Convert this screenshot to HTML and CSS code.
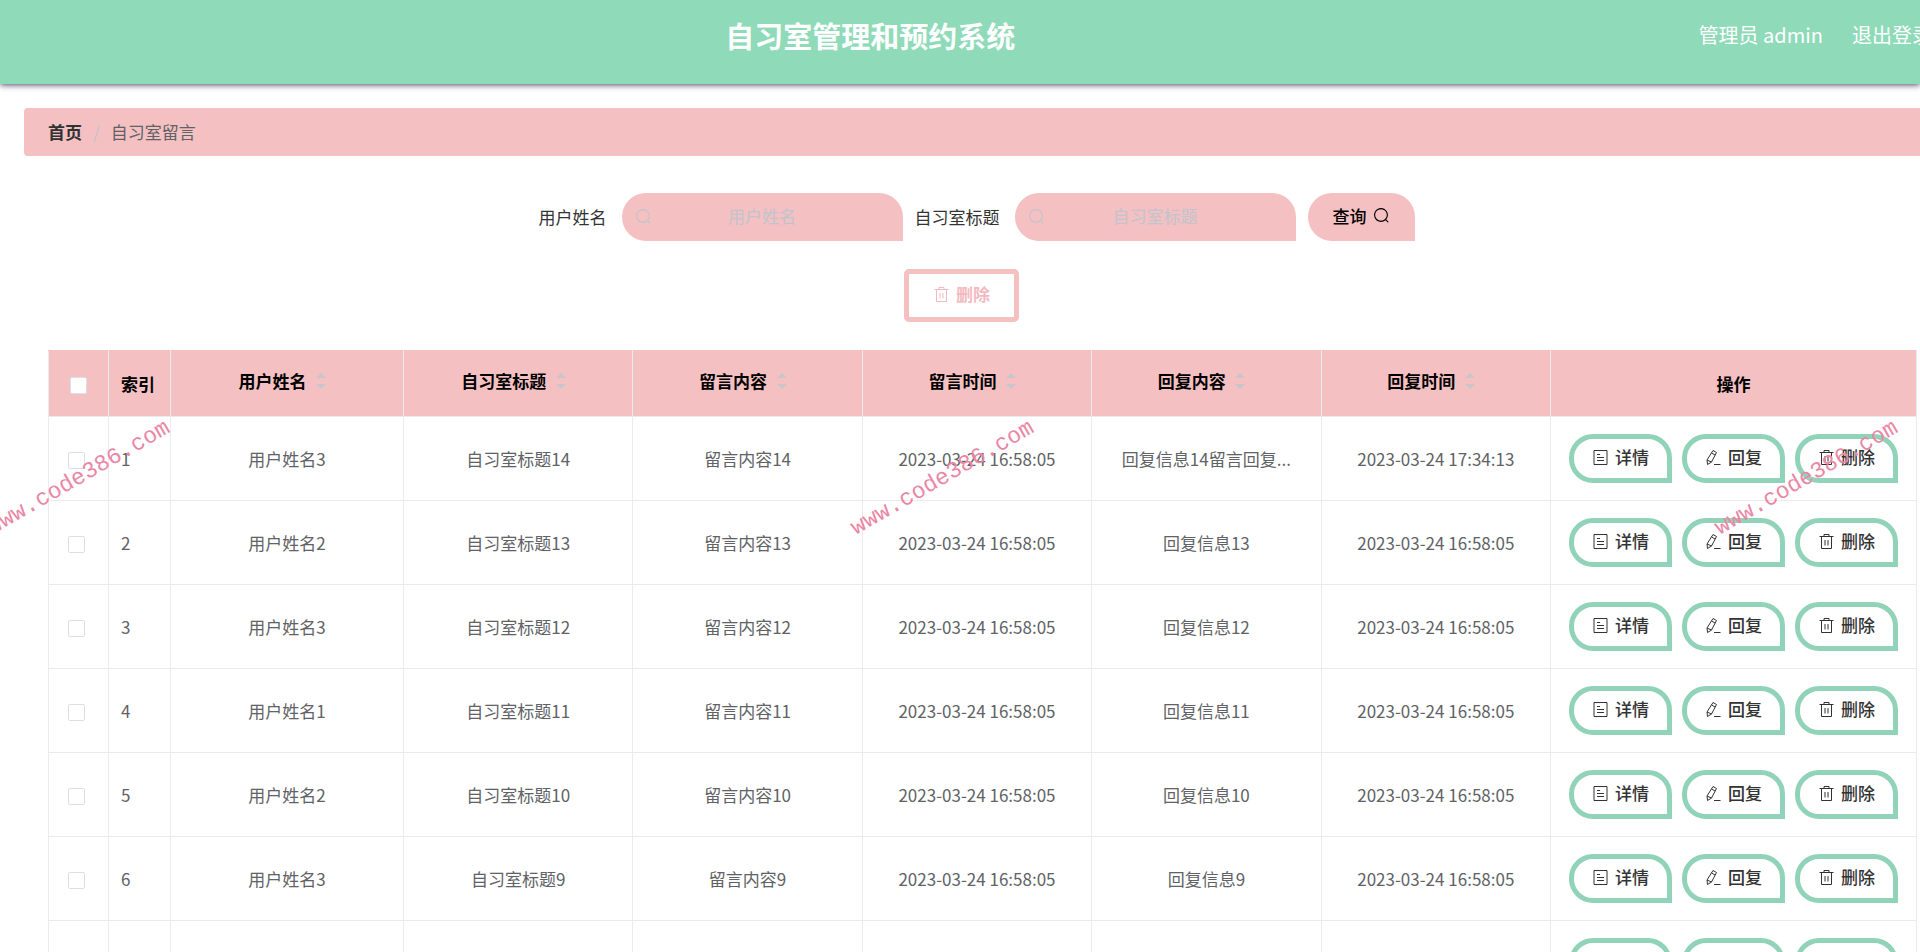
FILE: index.html
```html
<!DOCTYPE html>
<html lang="zh-CN">
<head>
<meta charset="utf-8">
<title>自习室管理和预约系统</title>
<link rel="stylesheet" href="styles.css">
</head>
<body>
<svg class="sprite" aria-hidden="true">
  <symbol id="i-search" viewBox="0 0 1024 1024"><path d="m795.904 750.72 124.992 124.928a32 32 0 0 1-45.248 45.248L750.656 795.904a416 416 0 1 1 45.248-45.248zM480 832a352 352 0 1 0 0-704 352 352 0 0 0 0 704z"/></symbol>
  <symbol id="i-delete" viewBox="0 0 17 17"><path d="M1.500 3.500h14M6 3.500V1.500h5v2M3.500 3.500v12h10v-12M7 7v5.500M10 7v5.500" fill="none" stroke="currentColor"/></symbol>
  <symbol id="i-doc" viewBox="0 0 17 17"><path d="M2 1.500h13v14H2zM5 5.500h3M5 8.500h7M5 11.500h7" fill="none" stroke="currentColor"/></symbol>
  <symbol id="i-edit" viewBox="0 0 17 17"><path d="M8 1.500 11.500 3.500 6.500 13 2.500 15.500 2 11zM6.500 4l3.600 2M2 11l4.500 2M9 15.500h6.500" fill="none" stroke="currentColor" stroke-linejoin="round"/></symbol>
</svg>

<header class="header">
  <h1 class="header-title">自习室管理和预约系统</h1>
  <nav class="header-nav">
    <span>管理员 admin</span>
    <a href="#">退出登录</a>
  </nav>
</header>

<main class="main">
  <nav class="breadcrumb">
    <a class="breadcrumb-home" href="#">首页</a>
    <span class="breadcrumb-sep">/</span>
    <span>自习室留言</span>
  </nav>

  <section class="content">
    <form class="search">
      <label for="q-name">用户姓名</label>
      <span class="field"><svg class="icon"><use href="#i-search"/></svg><input id="q-name" type="text" placeholder="用户姓名"></span>
      <label for="q-title">自习室标题</label>
      <span class="field"><svg class="icon"><use href="#i-search"/></svg><input id="q-title" type="text" placeholder="自习室标题"></span>
      <button class="btn-search" type="button">查询 <svg class="icon"><use href="#i-search"/></svg></button>
    </form>

    <div class="toolbar">
      <button class="btn-remove" type="button"><svg class="icon"><use href="#i-delete"/></svg>删除</button>
    </div>

    <table class="table">
      <colgroup><col class="col-check"><col class="col-index"><col class="col-name"><col><col><col><col><col><col class="col-ops"></colgroup>
      <thead>
        <tr>
          <th><input type="checkbox" aria-label="全选"></th>
          <th class="left">索引</th>
          <th><span class="sort">用户姓名<i class="caret"></i></span></th>
          <th><span class="sort">自习室标题<i class="caret"></i></span></th>
          <th><span class="sort">留言内容<i class="caret"></i></span></th>
          <th><span class="sort">留言时间<i class="caret"></i></span></th>
          <th><span class="sort">回复内容<i class="caret"></i></span></th>
          <th><span class="sort">回复时间<i class="caret"></i></span></th>
          <th>操作</th>
        </tr>
      </thead>
      <tbody id="rows"></tbody>
    </table>
  </section>
</main>

<div class="watermark" aria-hidden="true">
  <span>www.code386.com</span><span>www.code386.com</span><span>www.code386.com</span>
</div>
<script src="app.js"></script>
</body>
</html>
```
FILE: styles.css
```css
* { box-sizing: border-box; }

html { height: 100%; overflow: hidden; }

body {
  margin: 0;
  height: 100%;
  overflow: hidden;
  position: relative;
  background: #fff;
  color: #606266;
  font: 17px/24px "Noto Sans CJK SC", "Noto Sans", sans-serif;
}

button, input { font: inherit; color: inherit; }
a { color: inherit; text-decoration: none; }
.sprite { display: none; }
.icon { width: 17px; height: 17px; fill: currentColor; flex: none; }

.header {
  display: flex;
  align-items: flex-start;
  height: 84px;
  padding: 15px 0 0 42px;
  background: #8edab9;
  color: #fff;
  box-shadow: 0 1px 6px rgba(60, 50, 80, 0.9);
}
.header-title {
  flex: 1;
  margin: 0;
  font-size: 29px;
  line-height: 40px;
  font-weight: 700;
  text-align: center;
}
.header-nav {
  display: flex;
  gap: 29px;
  margin-right: -12px;
  font-size: 20px;
  line-height: 40px;
  white-space: nowrap;
}

.main { padding: 24px 0 0 24px; }

.breadcrumb {
  display: flex;
  align-items: center;
  gap: 11px;
  height: 48px;
  padding: 0 24px;
  border-radius: 4px 0 0 4px;
  background: #f5c0c2;
}
.breadcrumb-home { color: #303133; font-weight: 700; }
.breadcrumb-sep { color: #c0c4cc; }

.content { padding: 37px 3px 0 24px; }

.search {
  display: flex;
  justify-content: center;
  align-items: center;
  padding-right: 12px;
  color: #333;
}
.field { position: relative; margin: 0 12px 0 15px; }
.field .icon { position: absolute; left: 13px; top: 15px; color: #c0c4cc; }
.field input {
  display: block;
  width: 281px;
  height: 48px;
  padding: 0 36px 3px;
  border: 0;
  border-radius: 24px 24px 0 24px;
  background: #f5c0c2;
  text-align: center;
}
.field input::placeholder { color: #c0c4cc; opacity: 1; }

.btn-search {
  display: flex;
  align-items: center;
  gap: 6px;
  height: 48px;
  padding: 0 25px 3px;
  border: 0;
  border-radius: 24px 24px 0 24px;
  background: #f5c0c2;
  color: #000;
  font-weight: 500;
}

.toolbar {
  display: flex;
  justify-content: center;
  padding: 28px 42px 28px 0;
}
.btn-remove {
  display: flex;
  align-items: center;
  gap: 6px;
  height: 53px;
  padding: 0 24px 3px;
  border: 5px solid #f5c0c2;
  border-radius: 5px;
  background: #fff;
  color: #f3b9c0;
  font-weight: 700;
}

.table {
  width: 100%;
  table-layout: fixed;
  border-collapse: collapse;
  text-align: center;
}
.col-check { width: 60px; }
.col-index { width: 62px; }
.col-name { width: 233px; }
.col-ops { width: 366px; }
.table th, .table td {
  padding: 0 12px;
  border: 1px solid #ebebee;
  white-space: nowrap;
}
.table th {
  height: 66px;
  background: #f5c0c2;
  color: #000;
  font-weight: 700;
  border-top-color: #f5c0c2;
}
.table td { height: 84px; }
.table .left { text-align: left; }

.sort { display: inline-flex; align-items: center; padding-bottom: 6px; }
.caret {
  display: flex;
  flex-direction: column;
  align-items: center;
  gap: 6px;
  width: 29px;
}
.caret::before, .caret::after { content: ""; border: 5px solid transparent; }
.caret::before { border-top: 0; border-bottom: 5px solid #c9c5cc; }
.caret::after { border-bottom: 0; border-top: 5px solid #c9c5cc; }

.table input {
  appearance: none;
  display: block;
  width: 17px;
  height: 17px;
  margin: 3px auto 0;
  border: 1px solid #dcdfe6;
  border-radius: 2px;
  background: #fff;
}
.table td:first-child { padding-right: 16px; }

.ops { display: flex; justify-content: center; gap: 10px; }
.ops button {
  display: flex;
  align-items: center;
  gap: 6px;
  height: 49px;
  padding: 0 18px 3px;
  border: 5px solid #91d3b9;
  border-radius: 24px 24px 0 24px;
  background: #fff;
  color: #333;
  font-weight: 500;
}

.watermark {
  position: absolute;
  inset: 0;
  overflow: hidden;
  pointer-events: none;
  color: #ea87a6;
  font: 23px/24px "Liberation Mono", monospace;
}
.watermark span { position: absolute; top: 466px; transform: rotate(-30deg); }
.watermark span:nth-child(1) { left: -25px; }
.watermark span:nth-child(2) { left: 839px; }
.watermark span:nth-child(3) { left: 1703px; }
```
FILE: app.js
```js
const records = [
  [3, 14, "回复信息14留言回复...", "2023-03-24 17:34:13"],
  [2, 13, "回复信息13", "2023-03-24 16:58:05"],
  [3, 12, "回复信息12", "2023-03-24 16:58:05"],
  [1, 11, "回复信息11", "2023-03-24 16:58:05"],
  [2, 10, "回复信息10", "2023-03-24 16:58:05"],
  [3, 9, "回复信息9", "2023-03-24 16:58:05"],
  [1, 8, "回复信息8", "2023-03-24 16:58:05"]
];

const button = (icon, text) =>
  `<button type="button"><svg class="icon"><use href="#i-${icon}"/></svg>${text}</button>`;

document.getElementById("rows").innerHTML = records.map(([user, n, reply, time], i) => `
  <tr>
    <td><input type="checkbox" aria-label="选择第${i + 1}行"></td>
    <td class="left">${i + 1}</td>
    <td>用户姓名${user}</td>
    <td>自习室标题${n}</td>
    <td>留言内容${n}</td>
    <td>2023-03-24 16:58:05</td>
    <td>${reply}</td>
    <td>${time}</td>
    <td><div class="ops">${button("doc", "详情")}${button("edit", "回复")}${button("delete", "删除")}</div></td>
  </tr>`).join("");
```
